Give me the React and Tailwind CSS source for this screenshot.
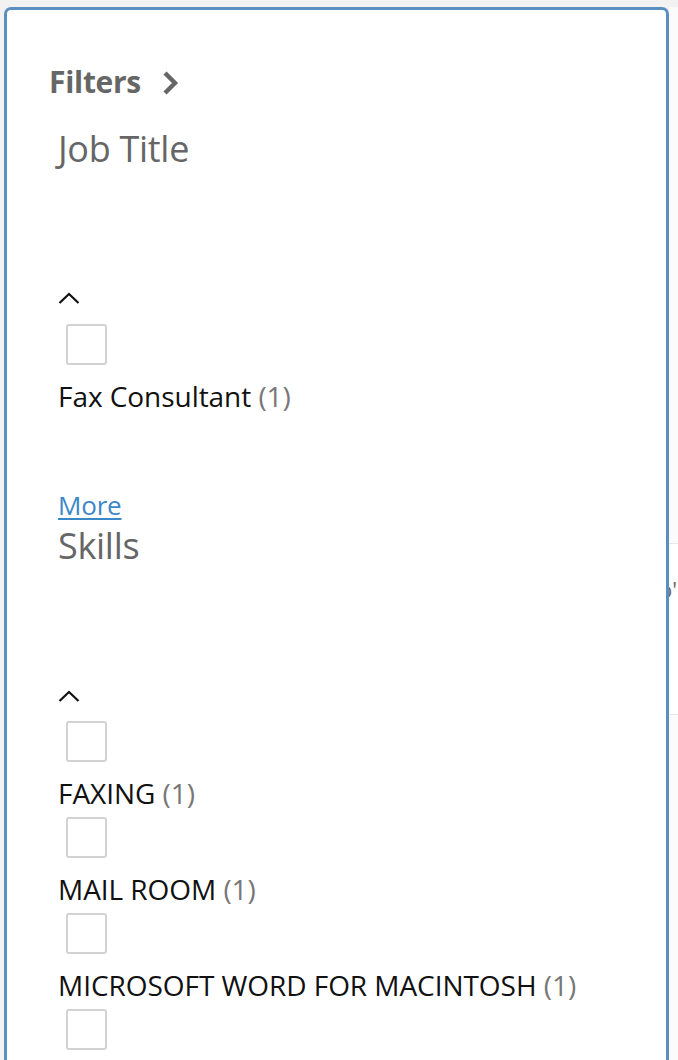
import React from "react";

function Caret() {
  return (
    <svg width="22" height="12" viewBox="0 0 22 12" className="block">
      <polyline points="1.5,11 11,2 20.5,11" fill="none" stroke="#111" strokeWidth="2.2" />
    </svg>
  );
}

function Box() {
  return <div className="ml-[8px] h-[41px] w-[41px] rounded-[3px] border-2 border-[#d2d2d2] bg-white" />;
}

function Item({ label }) {
  return (
    <div className="flex flex-col">
      <Box />
      <div className="mt-[13px] mb-[6px] h-[36px] text-[28px] leading-[36px] text-[#111] whitespace-nowrap tracking-[-0.05px]">
        {label} <span className="text-[#777]">(1)</span>
      </div>
    </div>
  );
}

export default function App() {
  return (
    <div
      className="flex h-[1060px] overflow-hidden bg-[#f2f2f2] pl-[4px] pt-[7px]"
      style={{ fontFamily: '"Open Sans", "Noto Sans", sans-serif' }}
    >
      <div className="w-[665px] shrink-0 h-[1200px] rounded-[7px] border-[3px] border-[#5b8fc0] bg-white pl-[42px] pt-[53px]">
        <div className="flex h-[38px] items-center gap-[20px] text-[30px] font-bold leading-[38px] text-[#666] tracking-[-0.3px]">
          <span>Filters</span>
          <svg width="18" height="26" viewBox="0 0 18 26" className="mt-[2px]">
            <polyline points="4,3 14,13 4,23" fill="none" stroke="#666" strokeWidth="4.4" />
          </svg>
        </div>
        <div className="ml-[9px] mt-[25px] flex flex-col">
          <div className="h-[46px] text-[36px] leading-[46px] text-[#666] tracking-[-0.3px]">Job Title</div>
          <div className="mt-[120px]">
            <Caret />
          </div>
          <div className="mt-[20px]">
            <Item label="Fax Consultant" />
          </div>
          <a className="mt-[67px] h-[36px] text-[26px] leading-[36px] text-[#3b88c8] underline underline-offset-[3px] decoration-[1.5px] tracking-[-0.2px]">
            More
          </a>
          <div className="h-[46px] text-[36px] leading-[46px] text-[#666] tracking-[-0.3px]">Skills</div>
          <div className="mt-[121px]">
            <Caret />
          </div>
          <div className="mt-[19px]">
            <Item label="FAXING" />
            <Item label="MAIL ROOM" />
            <Item label="MICROSOFT WORD FOR MACINTOSH" />
            <Box />
          </div>
        </div>
      </div>
      <div className="flex-1 bg-[#fbfbfb] pt-[536px]">
        <div className="h-[172px] overflow-hidden border-y border-[#e8e8e8] bg-white pt-[32px] text-[22px] leading-[26px] text-[#666] whitespace-nowrap">
          <span className="-ml-[10px] inline-block">o'</span>
        </div>
      </div>
    </div>
  );
}
